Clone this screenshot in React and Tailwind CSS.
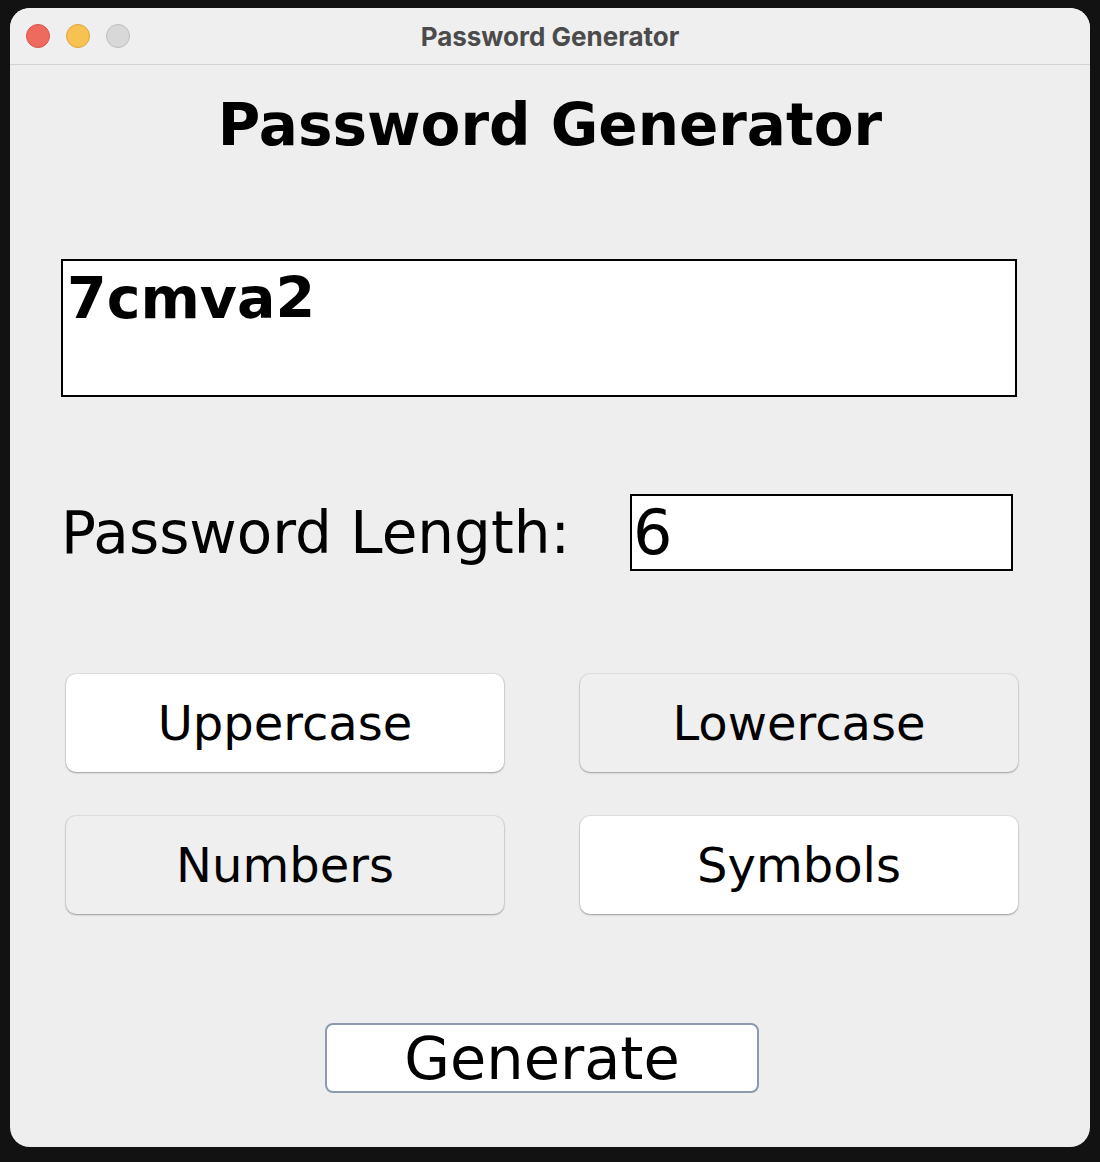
import { useState } from 'react';

const TOGGLES = [
  { label: 'Uppercase', on: true },
  { label: 'Lowercase', on: false },
  { label: 'Numbers', on: false },
  { label: 'Symbols', on: true },
];

function Toggle({ label, on }) {
  return (
    <button
      className={`w-[438px] h-[98px] rounded-[10px] shadow-[0_0_0_1px_rgba(0,0,0,0.06),0_1px_2px_rgba(0,0,0,0.3)] text-[48px] text-black leading-none ${
        on ? 'bg-white' : 'bg-[#efefef]'
      }`}
    >
      {label}
    </button>
  );
}

export default function App() {
  const [password] = useState('7cmva2');
  const [length] = useState('6');

  return (
    <div className="min-h-[1162px] bg-[#121212] pt-2 px-[10px] font-['DejaVu_Sans',sans-serif]">
      <div className="w-[1080px] h-[1139px] rounded-[20px] bg-[#eeeeee] overflow-hidden flex flex-col">
        {/* title bar */}
        <div className="h-[57px] shrink-0 grid grid-cols-[1fr_auto_1fr] items-center border-b border-[#d2d2d2] bg-[#efefef]">
          <div className="flex items-center gap-4 pl-4">
            <span className="w-6 h-6 rounded-full bg-[#ee6a5f] border border-[#d5554b]" />
            <span className="w-6 h-6 rounded-full bg-[#f6c251] border border-[#dba53c]" />
            <span className="w-6 h-6 rounded-full bg-[#d8d8d8] border border-[#bdbdbd]" />
          </div>
          <div className="font-['Inter',sans-serif] font-bold text-[26px] text-[#4b4b4b]">Password Generator</div>
          <div />
        </div>

        {/* heading */}
        <div className="h-[120px] flex items-center justify-center">
          <h1 className="text-[58px] font-bold text-black leading-none">Password Generator</h1>
        </div>

        {/* output field */}
        <div className="mt-[74px] ml-[51px] w-[956px] h-[138px] border-2 border-black bg-white px-[4px] pt-[9px]">
          <span className="text-[57px] font-bold leading-none text-black">{password}</span>
        </div>

        {/* length row */}
        <div className="mt-[97px] ml-[51px] h-[77px] flex items-center">
          <label className="text-[58px] text-black leading-none w-[569px]">Password Length:</label>
          <div className="w-[383px] h-[77px] border-2 border-black bg-white flex items-center px-[1px]">
            <span className="text-[62px] text-black leading-none">{length}</span>
          </div>
        </div>

        {/* toggles */}
        <div className="mt-[103px] ml-[56px] grid grid-cols-[438px_438px] gap-x-[76px] gap-y-[44px]">
          {TOGGLES.map((t) => (
            <Toggle key={t.label} {...t} />
          ))}
        </div>

        {/* generate */}
        <div className="mt-[109px] ml-[315px]">
          <button className="w-[434px] h-[70px] rounded-[8px] border-2 border-[#8c9aad] bg-white text-[59px] text-black leading-none">
            Generate
          </button>
        </div>
      </div>
    </div>
  );
}
